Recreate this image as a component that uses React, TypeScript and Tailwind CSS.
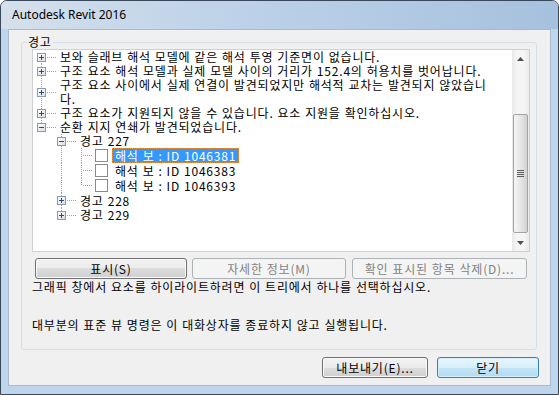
import React from "react";

type Line = "none" | "pipe" | "tee" | "ell" | "first";

type Row = {
  cells: Line[];
  box?: "plus" | "minus";
  check?: boolean;
  selected?: boolean;
  text: string[];
  h: number;
  hClass: string;
};

const ko = "font-['Noto_Sans_CJK_KR','Noto_Sans_CJK_SC',sans-serif]";

const rows: Row[] = [
  { cells: ["first"], box: "plus", text: ["보와 슬래브 해석 모델에 같은 해석 투영 기준면이 없습니다."], h: 14, hClass: "h-[14px]" },
  { cells: ["tee"], box: "plus", text: ["구조 요소 해석 모델과 실제 모델 사이의 거리가 152.4의 허용치를 벗어납니다."], h: 14, hClass: "h-[14px]" },
  {
    cells: ["tee"],
    box: "plus",
    text: ["구조 요소 사이에서 실제 연결이 발견되었지만 해석적 교차는 발견되지 않았습니", "다."],
    h: 28,
    hClass: "h-[28px]",
  },
  { cells: ["tee"], box: "plus", text: ["구조 요소가 지원되지 않을 수 있습니다. 요소 지원을 확인하십시오."], h: 14, hClass: "h-[14px]" },
  { cells: ["ell"], box: "minus", text: ["순환 지지 연쇄가 발견되었습니다."], h: 14, hClass: "h-[14px]" },
  { cells: ["none", "tee"], box: "minus", text: ["경고 227"], h: 14, hClass: "h-[14px]" },
  { cells: ["none", "pipe", "tee"], check: true, selected: true, text: ["해석 보 : ID 1046381"], h: 15, hClass: "h-[15px]" },
  { cells: ["none", "pipe", "tee"], check: true, text: ["해석 보 : ID 1046383"], h: 15, hClass: "h-[15px]" },
  { cells: ["none", "pipe", "ell"], check: true, text: ["해석 보 : ID 1046393"], h: 15, hClass: "h-[15px]" },
  { cells: ["none", "tee"], box: "plus", text: ["경고 228"], h: 15, hClass: "h-[15px]" },
  { cells: ["none", "ell"], box: "plus", text: ["경고 229"], h: 14, hClass: "h-[14px]" },
];

function Cell({ line, h, w, box }: { line: Line; h: number; w: number; box?: "plus" | "minus" }) {
  const m = Math.floor(h / 2);
  const dot = { stroke: "#a0a0a0", strokeDasharray: "1 1" };
  return (
    <svg width={w} height={h} shapeRendering="crispEdges" className="block shrink-0">
      {(line === "pipe" || line === "tee") && <line x1={8.5} y1={0} x2={8.5} y2={h} {...dot} />}
      {line === "ell" && <line x1={8.5} y1={0} x2={8.5} y2={m + 1} {...dot} />}
      {line === "first" && <line x1={8.5} y1={m} x2={8.5} y2={h} {...dot} />}
      {line !== "none" && line !== "pipe" && <line x1={10} y1={m + 0.5} x2={w} y2={m + 0.5} {...dot} />}
      {box && (
        <g>
          <defs>
            <linearGradient id="bx" x1="0" y1="0" x2="1" y2="1">
              <stop offset="0" stopColor="#ffffff" />
              <stop offset="1" stopColor="#d6dde6" />
            </linearGradient>
          </defs>
          <rect x={4.5} y={m - 3.5} width={8} height={8} fill="url(#bx)" stroke="#8a9bb0" />
          <line x1={6} y1={m + 0.5} x2={11} y2={m + 0.5} stroke="#2c4a7c" />
          {box === "plus" && <line x1={8.5} y1={m - 2} x2={8.5} y2={m + 3} stroke="#2c4a7c" />}
        </g>
      )}
    </svg>
  );
}

function TreeRow({ r }: { r: Row }) {
  const own = r.cells.length - 1;
  return (
    <div className={`flex ${r.hClass}`}>
      {r.cells.map((c, i) => (
        <Cell key={i} line={c} h={r.h} w={i === own && !r.check ? 24 : 20} box={i === own ? r.box : undefined} />
      ))}
      {r.check && (
        <div className="flex w-[16px] items-center justify-center">
          <span className="block h-[13px] w-[13px] border border-[#8a8a8a] bg-white" />
        </div>
      )}
      <div
        className={`flex items-center whitespace-nowrap px-[3px] text-[12px] leading-[14px] ${r.check ? "ml-[3px]" : ""} ${
          r.selected ? "bg-[#3399ff] text-white outline outline-1 -outline-offset-1 outline-dotted outline-[#e8913a]" : "text-black"
        }`}
      >
        <p>
          {r.text.map((t, i) => (
            <React.Fragment key={i}>
              {i > 0 && <br />}
              {t}
            </React.Fragment>
          ))}
        </p>
      </div>
    </div>
  );
}

function ScrollBar() {
  return (
    <div className="flex w-[17px] shrink-0 flex-col bg-[linear-gradient(to_right,#e9e9e9,#f5f5f5_30%,#f5f5f5_70%,#e9e9e9)]">
      <div className="flex h-[17px] items-center justify-center">
        <svg width="7" height="4">
          <polygon points="3.5,0 7,4 0,4" fill="#4f4f4f" />
        </svg>
      </div>
      <div className="flex flex-1 flex-col">
        <div className="h-[47px]" />
        <div className="mx-[1px] flex h-[119px] items-center justify-center rounded-[2px] border border-[#a3a3a3] bg-[linear-gradient(to_right,#f6f6f6,#e6e6e6_50%,#d2d2d2)]">
          <div className="flex flex-col gap-[1px]">
            <span className="block h-[1px] w-[7px] bg-[#5c5c5c]" />
            <span className="block h-[1px] w-[7px] bg-[#5c5c5c]" />
            <span className="block h-[1px] w-[7px] bg-[#5c5c5c]" />
            <span className="block h-[1px] w-[7px] bg-[#5c5c5c]" />
          </div>
        </div>
      </div>
      <div className="flex h-[17px] items-center justify-center">
        <svg width="7" height="4">
          <polygon points="0,0 7,0 3.5,4" fill="#4f4f4f" />
        </svg>
      </div>
    </div>
  );
}

function Btn({ children, w, kind = "normal" }: { children: React.ReactNode; w: string; kind?: "normal" | "disabled" | "default" }) {
  const look =
    kind === "disabled"
      ? "border-[#adb2b5] bg-[#f4f4f4] text-[#838383]"
      : kind === "default"
      ? "border-[#3c7fb1] bg-[linear-gradient(#e9f5fc,#d8eefb_50%,#c3e4f7_50%,#b2dcf4)] text-black shadow-[inset_0_0_0_1px_#d4edfb]"
      : "border-[#707070] bg-[linear-gradient(#f2f2f2,#ebebeb_50%,#dddddd_50%,#cfcfcf)] text-black shadow-[inset_0_0_0_1px_#fbfbfb]";
  return (
    <div className={`flex h-[21px] items-center justify-center rounded-[3px] border text-[12px] leading-none ${w} ${look}`}>
      {children}
    </div>
  );
}

export default function App() {
  return (
    <div
      className={`flex h-[395px] w-[559px] flex-col overflow-hidden rounded-t-[7px] border border-[#38475a] bg-[#bfd5ec] tracking-[0.8px] [word-spacing:0.5px] ${ko}`}
    >
      <div className="flex h-[28px] items-center bg-[linear-gradient(to_right,#d5e0eb,#c0d4e9_35%,#a6c1de)] pl-[11px]">
        <span className="font-['Noto_Sans','Liberation_Sans',sans-serif] text-[12px] tracking-normal text-black [word-spacing:0]">
          Autodesk Revit 2016
        </span>
      </div>

      <div className="mx-[7px] mb-[8px] flex flex-1 flex-col border border-[#a5bbd3] bg-[#f0f0f0]">
        <fieldset className="ml-[12px] mr-[13px] mt-[5px] rounded-[3px] border border-[#d5dfe5] pb-[17px] pl-[10px] pr-[6px]">
          <legend className="-ml-[5px] px-[1px] text-[12px] leading-[14px] text-black">경고</legend>

          <div className="flex h-[203px] border border-[#d0d0d0] bg-white">
            <div className="min-w-0 flex-1">
              {rows.map((r, i) => (
                <TreeRow key={i} r={r} />
              ))}
            </div>
            <ScrollBar />
          </div>

          <div className="ml-[3px] mt-[6px] flex">
            <Btn w="w-[152px]">표시(S)</Btn>
            <div className="w-[5px]" />
            <Btn w="w-[154px]" kind="disabled">
              자세한 정보(M)
            </Btn>
            <div className="w-[6px]" />
            <Btn w="w-[175px]" kind="disabled">
              확인 표시된 항목 삭제(D)...
            </Btn>
          </div>

          <p className="mt-[1px] text-[12px] leading-[14px] text-black">
            그래픽 창에서 요소를 하이라이트하려면 이 트리에서 하나를 선택하십시오.
          </p>
          <p className="mt-[24px] text-[12px] leading-[14px] text-black">
            대부분의 표준 뷰 명령은 이 대화상자를 종료하지 않고 실행됩니다.
          </p>
        </fieldset>

        <div className="mr-[11px] mt-[7px] flex justify-end gap-[9px]">
          <Btn w="w-[106px]">내보내기(E)...</Btn>
          <Btn w="w-[102px]" kind="default">
            닫기
          </Btn>
        </div>
      </div>
    </div>
  );
}
